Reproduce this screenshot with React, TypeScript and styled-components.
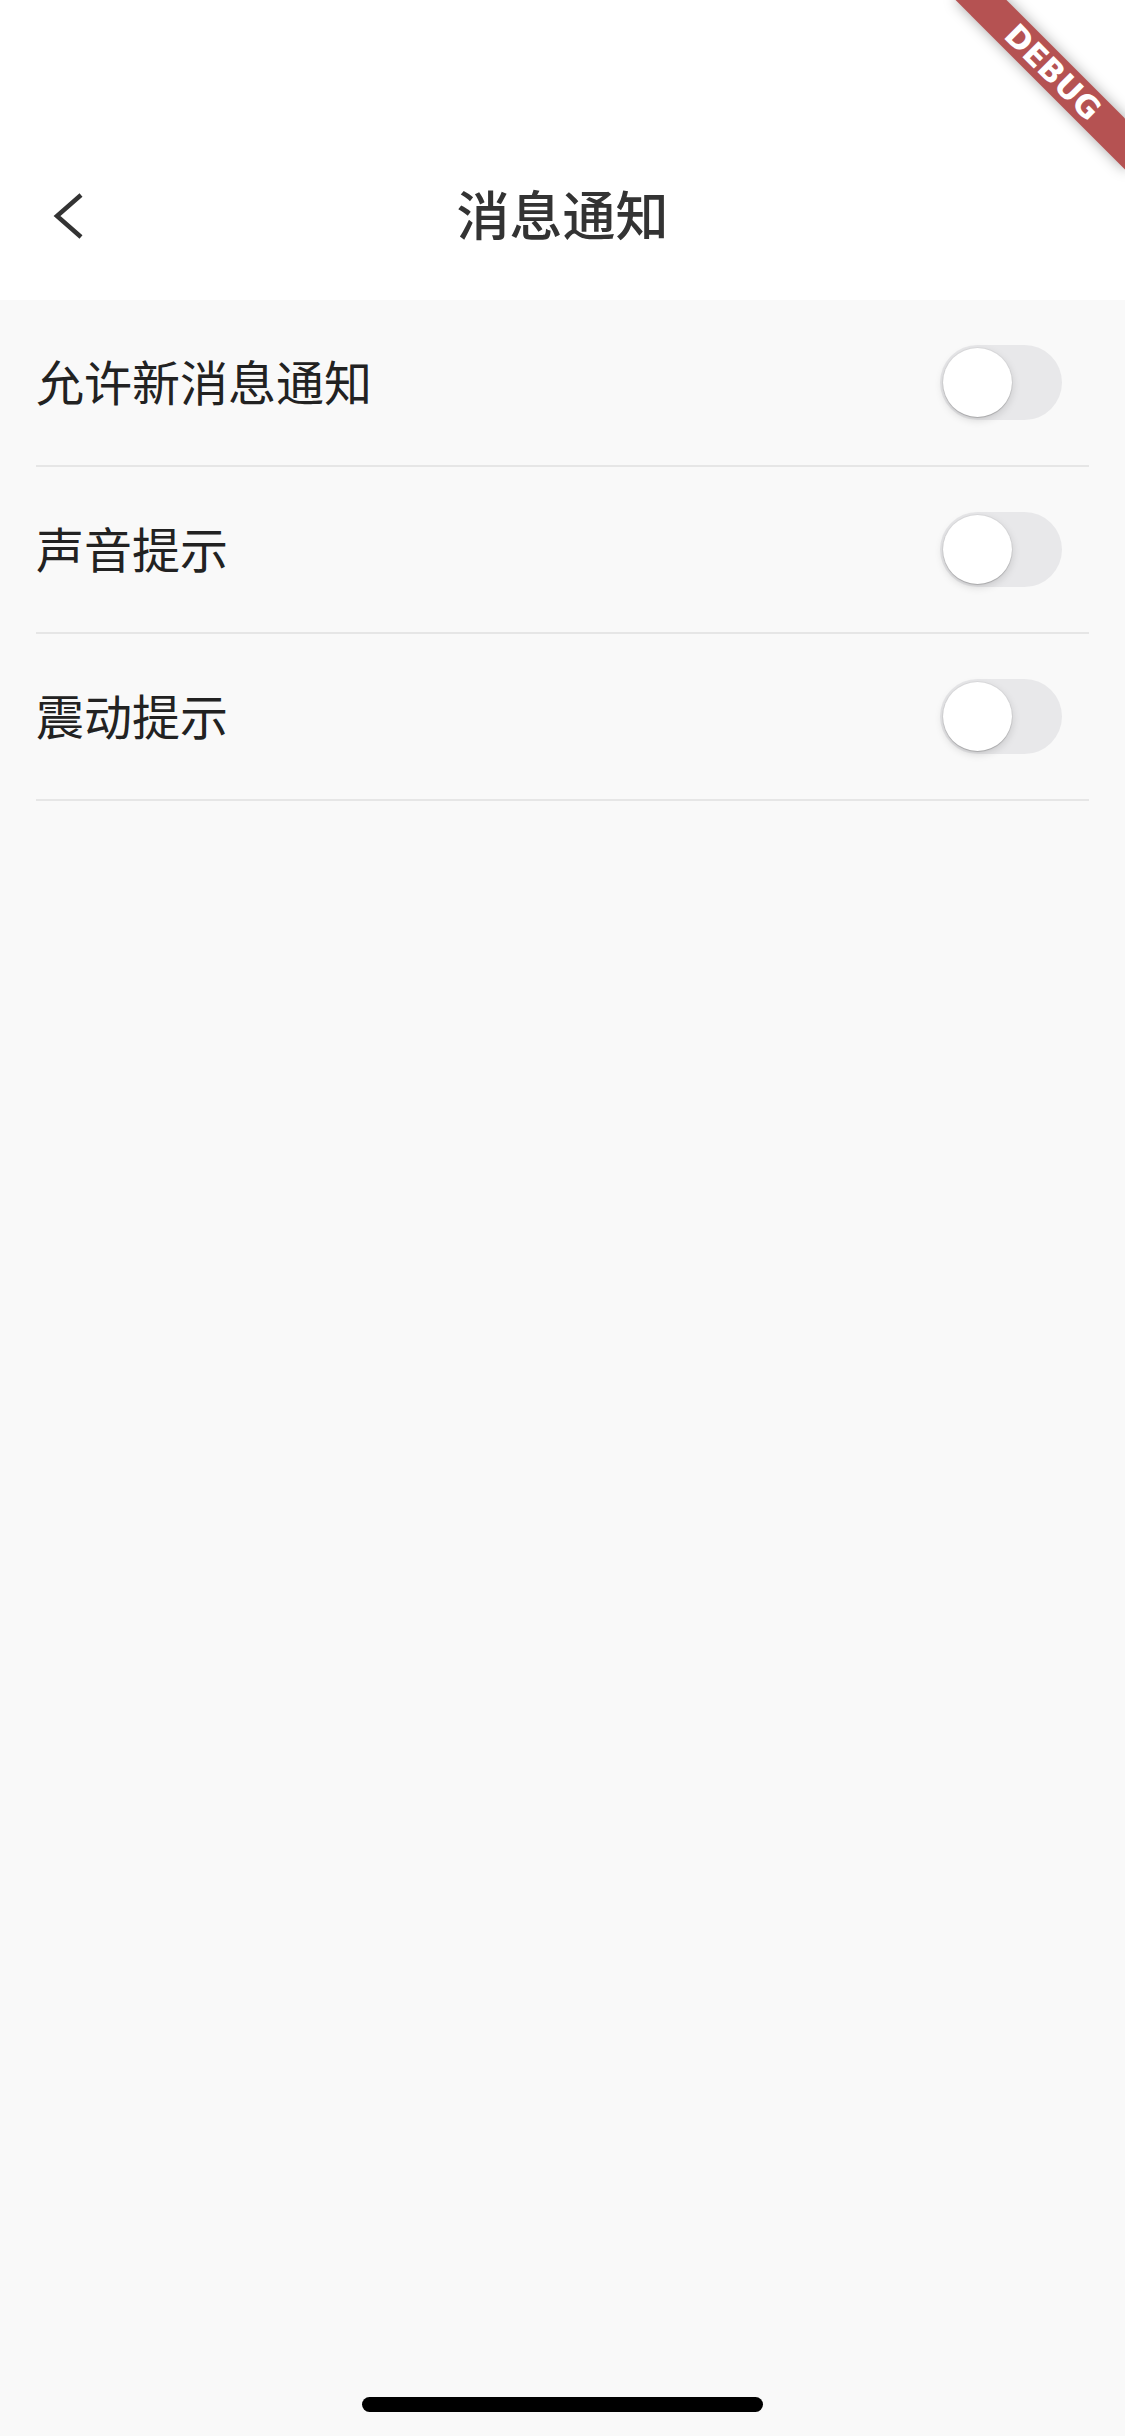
import styled, { createGlobalStyle } from "styled-components";

const GlobalStyle = createGlobalStyle`
  html, body {
    margin: 0;
    padding: 0;
  }
  body {
    font-family: "Noto Sans CJK SC", "Noto Sans", sans-serif;
    background: #f9f9f9;
  }
`;

export default function App() {
  const items = ["允许新消息通知", "声音提示", "震动提示"];

  return (
    <Page>
      <GlobalStyle />
      <Header>
        <Toolbar>
          <BackBtn aria-label="返回">
            <svg width="32" height="48" viewBox="0 0 32 48">
              <polyline
                points="28,3 4,24 28,45"
                fill="none"
                stroke="#333"
                strokeWidth="4.5"
                strokeLinejoin="miter"
              />
            </svg>
          </BackBtn>
          <Title>消息通知</Title>
          <span />
        </Toolbar>
      </Header>
      <List>
        {items.map((label) => (
          <Row key={label}>
            <Label>{label}</Label>
            <Switch>
              <Thumb />
            </Switch>
          </Row>
        ))}
      </List>
      <HomeBar />
      <DebugBanner>DEBUG</DebugBanner>
    </Page>
  );
}

const Page = styled.div`
  position: relative;
  width: 1125px;
  height: 2436px;
  overflow: hidden;
  background: #f9f9f9;
`;

const Header = styled.div`
  background: #fff;
  padding-top: 132px;
`;

const Toolbar = styled.div`
  height: 168px;
  display: grid;
  grid-template-columns: 1fr auto 1fr;
  align-items: center;
`;

const BackBtn = styled.div`
  padding-left: 53px;
  display: flex;
  align-items: center;
  svg {
    display: block;
  }
`;

const Title = styled.h1`
  margin: 0 0 6px;
  font-size: 53px;
  font-weight: 500;
  color: #333;
  line-height: 1;
`;

const List = styled.div`
  padding: 0 36px;
`;

const Row = styled.div`
  height: 165px;
  display: flex;
  align-items: center;
  justify-content: space-between;
  border-bottom: 2px solid #e6e6e6;
  padding-right: 27px;
`;

const Label = styled.span`
  font-size: 48px;
  color: #222;
  line-height: 1;
  padding-bottom: 6px;
`;

const Switch = styled.div`
  width: 122px;
  height: 75px;
  border-radius: 38px;
  background: #e8e8ea;
  display: flex;
  align-items: center;
  padding-left: 3px;
  box-sizing: border-box;
`;

const Thumb = styled.div`
  width: 69px;
  height: 69px;
  border-radius: 50%;
  background: #fff;
  box-shadow: 0 3px 8px rgba(0, 0, 0, 0.15), 0 1px 1px rgba(0, 0, 0, 0.16),
    0 0 0 1px rgba(0, 0, 0, 0.04);
`;

const HomeBar = styled.div`
  position: absolute;
  left: 362px;
  bottom: 24px;
  width: 401px;
  height: 15px;
  border-radius: 8px;
  background: #000;
`;

const DebugBanner = styled.div`
  position: absolute;
  left: 933px;
  top: 54px;
  width: 240px;
  height: 36px;
  transform: rotate(45deg);
  background: #b55252;
  box-shadow: 0 0 14px rgba(0, 0, 0, 0.35);
  color: #fff;
  font-family: "DejaVu Sans", "Liberation Sans", sans-serif;
  font-weight: 700;
  font-size: 31px;
  line-height: 36px;
  text-align: center;
`;
